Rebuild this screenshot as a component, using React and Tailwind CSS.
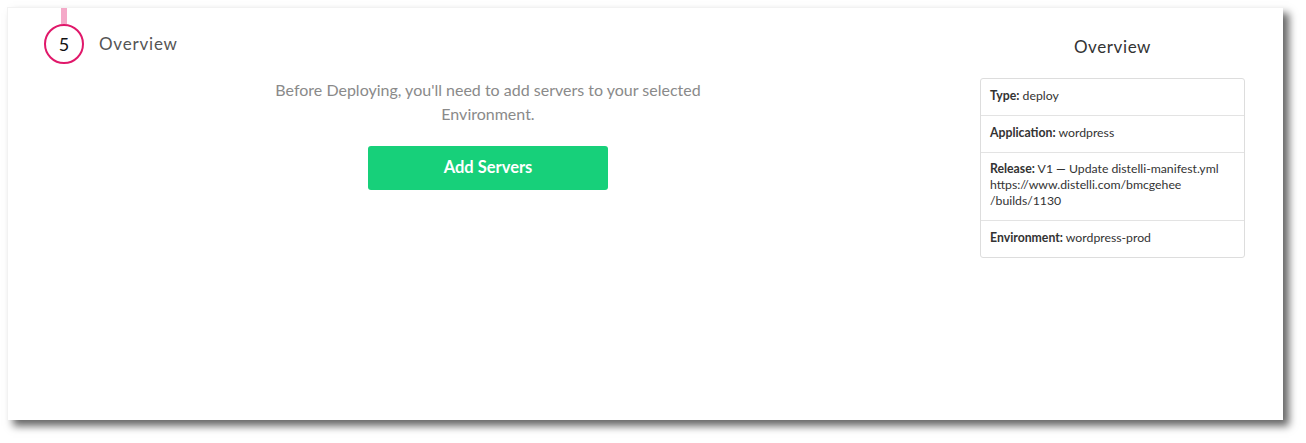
export default function App() {
  return (
    <div className="w-[1306px] h-[443px] bg-white pt-[7px] pl-[7px]" style={{ fontFamily: "Lato, 'Open Sans', sans-serif" }}>
      <div className="w-[1276px] h-[413px] bg-white border-l border-t border-[#f2f2f2] shadow-[6px_6px_8px_rgba(0,0,0,0.6)] flex">
        <div className="w-[960px] flex flex-col">
          <div className="flex flex-col pl-[36px]">
            <div className="w-[40px] flex justify-center">
              <div className="w-[6px] h-[16px] bg-[#f4a9c8]"></div>
            </div>
            <div className="flex items-center">
              <div className="w-[40px] h-[40px] rounded-full border-[2.5px] border-[#e0186a] flex items-center justify-center text-[18px] text-[#111]">5</div>
              <div className="ml-[15px] text-[17px] text-[#555] tracking-[0.8px]">Overview</div>
            </div>
          </div>
          <div className="mt-[14px] flex flex-col items-center">
            <p className="w-[460px] text-center text-[16px] leading-[24px] text-[#8a8a8a]">
              Before Deploying, you'll need to add servers to your selected Environment.
            </p>
            <button className="mt-[20px] w-[240px] h-[44px] pb-[2px] rounded-[3px] bg-[#17d07a] text-white font-bold text-[16.5px]">
              Add Servers
            </button>
          </div>
        </div>
        <div className="w-[265px] ml-[12px] flex flex-col">
          <div className="mt-[29px] h-[20px] flex items-center justify-center text-[17px] text-[#333] tracking-[0.6px]">Overview</div>
          <div className="mt-[21px] border border-[#dddddd] rounded-[3px] text-[12.25px] text-[#333]">
            <div className="h-[37px] px-[9px] pb-[2px] flex items-center border-b border-[#e3e3e3]">
              <span><b>Type:</b> deploy</span>
            </div>
            <div className="h-[37px] px-[9px] pb-[2px] flex items-center border-b border-[#e3e3e3]">
              <span><b>Application:</b> wordpress</span>
            </div>
            <div className="h-[68px] px-[9px] pt-[8px] leading-[16px] border-b border-[#e3e3e3]">
              <div><b>Release:</b> V1 — Update distelli-manifest.yml</div>
              <div>https://www.distelli.com/bmcgehee</div>
              <div>/builds/1130</div>
            </div>
            <div className="h-[36px] px-[9px] pb-[2px] flex items-center">
              <span><b>Environment:</b> wordpress-prod</span>
            </div>
          </div>
        </div>
      </div>
    </div>
  );
}
